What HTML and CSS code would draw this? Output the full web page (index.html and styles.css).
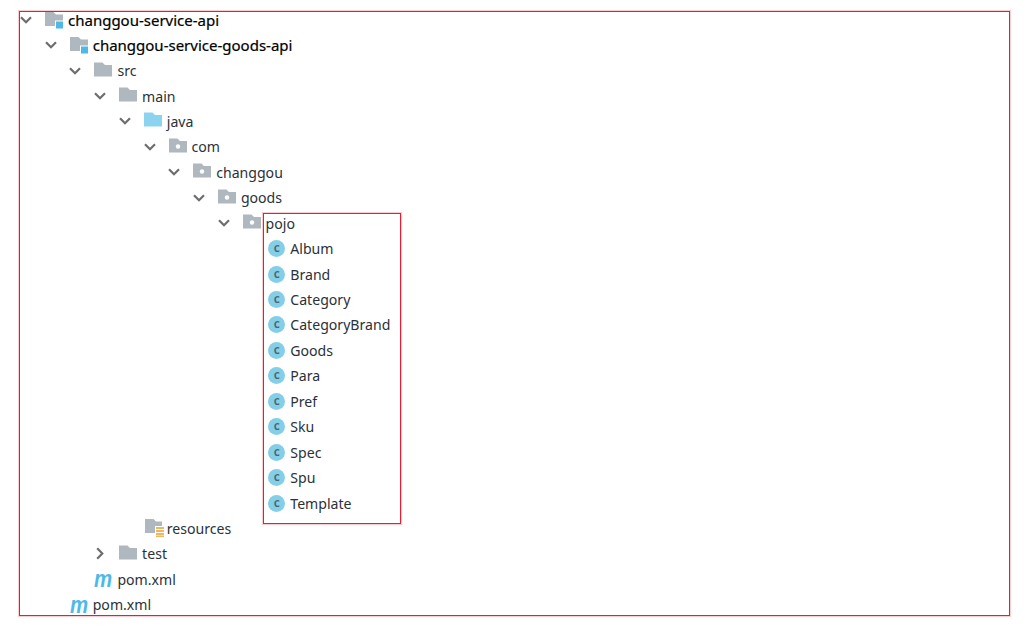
FILE: index.html
```html
<!DOCTYPE html>
<html lang="zh">
<head>
  <meta charset="UTF-8" />
  <title>changgou-service-api</title>
  <link rel="stylesheet" href="styles.css">
</head>
<body>
  <svg class="defs" width="0" height="0">
    <symbol id="chev-down" viewBox="0 0 12 8"><path d="M1 1.2 6 6.3 11 1.2" /></symbol>
    <symbol id="chev-right" viewBox="0 0 8 13"><path d="M1.2 1.2 6.3 6.5 1.2 11.8" /></symbol>
    <symbol id="folder" viewBox="0 0 23 18"><path fill="#afb8bf" d="M0 .5H8.5L11 3H18V14.5H0Z" /></symbol>
    <symbol id="folder-java" viewBox="0 0 23 18"><path fill="#8bd3ee" d="M0 .5H8.5L11 3H18V14.5H0Z" /></symbol>
    <symbol id="folder-pkg" viewBox="0 0 23 18">
      <path fill="#afb8bf" d="M0 .5H8.5L11 3H18V14.5H0Z" />
      <circle cx="9" cy="8.5" r="2.2" fill="#fff" />
    </symbol>
    <symbol id="folder-mod" viewBox="0 0 23 18">
      <path fill="#afb8bf" d="M0 1H8.5L11 3.5H18V15H0Z" />
      <rect x="10" y="9.5" width="9" height="9" fill="#fff" />
      <rect x="11" y="10.5" width="7" height="7" fill="#4fb9e6" />
    </symbol>
    <symbol id="folder-res" viewBox="0 0 23 18">
      <path fill="#afb8bf" d="M1 0H9.5L12 2.5H18V14H1Z" />
      <rect x="11" y="7" width="9" height="11" fill="#fff" />
      <path stroke="#efb75f" stroke-width="2" d="M12 9H20M12 12H20M12 15H20M12 17.5H20" />
    </symbol>
  </svg>

  <div class="tree">
    <div class="row lvl-0 module"><svg class="chev"><use href="#chev-down"/></svg><svg class="icon"><use href="#folder-mod"/></svg>changgou-service-api</div>
    <div class="row lvl-1 module"><svg class="chev"><use href="#chev-down"/></svg><svg class="icon"><use href="#folder-mod"/></svg>changgou-service-goods-api</div>
    <div class="row lvl-2"><svg class="chev"><use href="#chev-down"/></svg><svg class="icon"><use href="#folder"/></svg>src</div>
    <div class="row lvl-3"><svg class="chev"><use href="#chev-down"/></svg><svg class="icon"><use href="#folder"/></svg>main</div>
    <div class="row lvl-4"><svg class="chev"><use href="#chev-down"/></svg><svg class="icon"><use href="#folder-java"/></svg>java</div>
    <div class="row lvl-5"><svg class="chev"><use href="#chev-down"/></svg><svg class="icon"><use href="#folder-pkg"/></svg>com</div>
    <div class="row lvl-6"><svg class="chev"><use href="#chev-down"/></svg><svg class="icon"><use href="#folder-pkg"/></svg>changgou</div>
    <div class="row lvl-7"><svg class="chev"><use href="#chev-down"/></svg><svg class="icon"><use href="#folder-pkg"/></svg>goods</div>
    <div class="row lvl-8"><svg class="chev"><use href="#chev-down"/></svg><svg class="icon"><use href="#folder-pkg"/></svg>pojo</div>
    <div class="row lvl-9"><span class="chev"></span><span class="cls">c</span>Album</div>
    <div class="row lvl-9"><span class="chev"></span><span class="cls">c</span>Brand</div>
    <div class="row lvl-9"><span class="chev"></span><span class="cls">c</span>Category</div>
    <div class="row lvl-9"><span class="chev"></span><span class="cls">c</span>CategoryBrand</div>
    <div class="row lvl-9"><span class="chev"></span><span class="cls">c</span>Goods</div>
    <div class="row lvl-9"><span class="chev"></span><span class="cls">c</span>Para</div>
    <div class="row lvl-9"><span class="chev"></span><span class="cls">c</span>Pref</div>
    <div class="row lvl-9"><span class="chev"></span><span class="cls">c</span>Sku</div>
    <div class="row lvl-9"><span class="chev"></span><span class="cls">c</span>Spec</div>
    <div class="row lvl-9"><span class="chev"></span><span class="cls">c</span>Spu</div>
    <div class="row lvl-9"><span class="chev"></span><span class="cls">c</span>Template</div>
    <div class="row lvl-4"><span class="chev"></span><svg class="icon"><use href="#folder-res"/></svg>resources</div>
    <div class="row lvl-3"><svg class="chev chev-closed"><use href="#chev-right"/></svg><svg class="icon"><use href="#folder"/></svg>test</div>
    <div class="row lvl-2"><span class="chev"></span><span class="maven"><span class="maven-m">m</span></span>pom.xml</div>
    <div class="row lvl-1"><span class="chev"></span><span class="maven"><span class="maven-m">m</span></span>pom.xml</div>
  </div>

  <div class="mark mark-outer"></div>
  <div class="mark mark-pojo"></div>
</body>
</html>
```

FILE: styles.css
```css
html, body {
  margin: 0;
  padding: 0;
  height: 629px;
  overflow: hidden;
  background: #fff;
}
.defs {
  position: absolute;
}
.tree {
  padding: 7px 0 0 20px;
  font-family: "Noto Sans", sans-serif;
  font-size: 14.1px;
  color: #2a3238;
}
.row {
  display: flex;
  align-items: center;
  height: 25.45px;
  white-space: nowrap;
}
.module {
  color: #000;
  font-size: 15px;
  -webkit-text-stroke: 0.2px #000;
}
.lvl-1 { padding-left: 24.7px; }
.lvl-2 { padding-left: 49.4px; }
.lvl-3 { padding-left: 74.1px; }
.lvl-4 { padding-left: 98.8px; }
.lvl-5 { padding-left: 123.5px; }
.lvl-6 { padding-left: 148.2px; }
.lvl-7 { padding-left: 172.9px; }
.lvl-8 { padding-left: 197.6px; }
.lvl-9 { padding-left: 222.3px; }

.chev {
  flex: none;
  width: 12px;
  height: 8px;
  margin-right: 13px;
  fill: none;
  stroke: #6e6e6e;
  stroke-width: 2.2;
}
.chev-closed {
  width: 8px;
  height: 13px;
  margin-left: 2px;
  margin-right: 15px;
}
.icon {
  flex: none;
  width: 23px;
  height: 18px;
}
.cls {
  flex: none;
  box-sizing: border-box;
  width: 17px;
  height: 17px;
  margin: 0 5px 0 1px;
  border-radius: 50%;
  background: #84cfe8;
  color: #4d626d;
  font-size: 12px;
  font-weight: 600;
  line-height: 15px;
  text-align: center;
}
.maven {
  flex: none;
  width: 23px;
  height: 18px;
}
.maven-m {
  display: block;
  width: 18px;
  color: #4fb9e6;
  font-family: "Liberation Sans", sans-serif;
  font-size: 24px;
  font-style: italic;
  font-weight: 700;
  line-height: 18px;
  transform: scaleX(0.85);
  transform-origin: left center;
}

/* red rectangles drawn over the tree */
.mark {
  position: absolute;
  box-sizing: border-box;
  border: 1px solid #ee1c2e;
  box-shadow: 0 0 0 1px rgba(238, 28, 46, 0.22);
}
.mark-outer {
  left: 19px;
  top: 11px;
  width: 991px;
  height: 605px;
}
.mark-pojo {
  left: 263px;
  top: 213px;
  width: 138px;
  height: 311px;
}
```
